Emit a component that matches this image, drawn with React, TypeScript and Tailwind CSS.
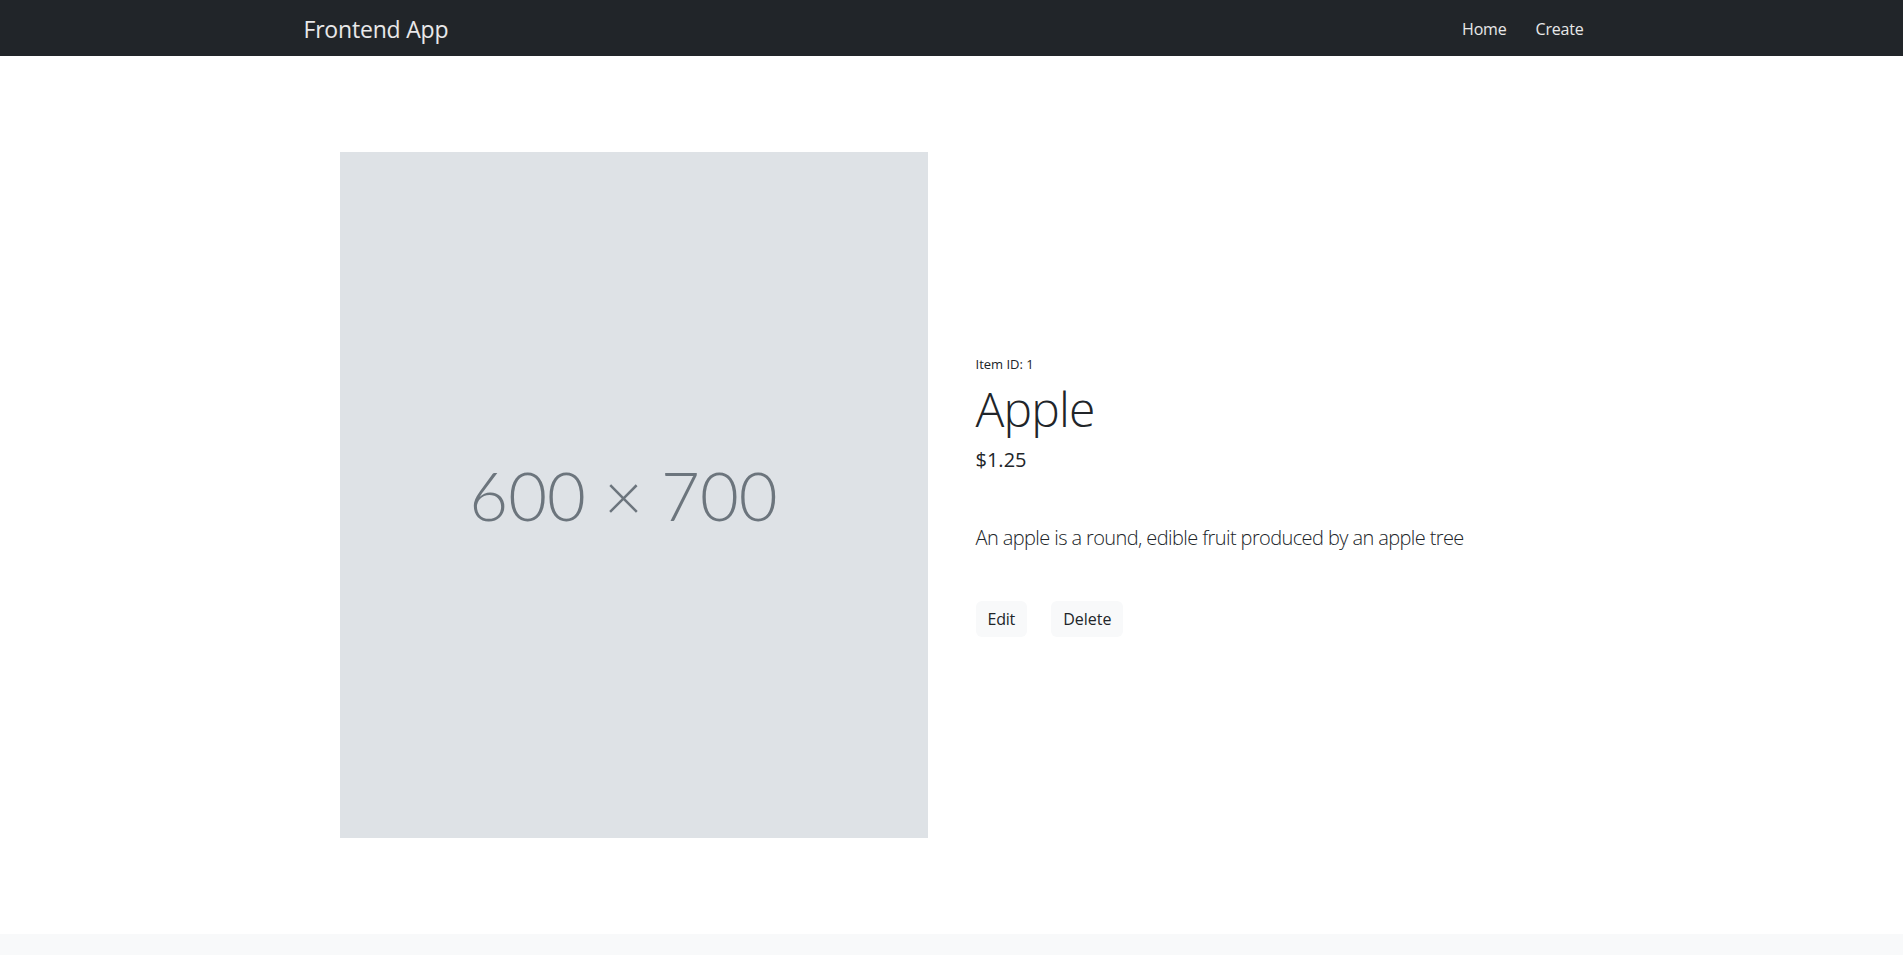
import React from "react";

const item = {
  id: 1,
  name: "Apple",
  price: 1.25,
  description: "An apple is a round, edible fruit produced by an apple tree",
};

function Navbar() {
  return (
    <nav className="bg-[#212529] h-[56px] flex justify-center">
      <div className="w-[1296px] flex items-center justify-between pt-[2px]">
        <a href="#" className="text-[23px] text-white/90 leading-[30px] tracking-[-0.2px]">
          Frontend App
        </a>
        <div className="flex items-center gap-[29px] text-[16px] text-white/90 pr-[16px] tracking-[-0.2px]">
          <a href="#">Home</a>
          <a href="#">Create</a>
        </div>
      </div>
    </nav>
  );
}

function Placeholder() {
  return (
    <div className="w-[588px] h-[686px] bg-[#dee2e6] flex items-center justify-center shrink-0">
      <span
        className="text-[67px] font-light text-[#6c757d] pr-[20px]"
        style={{ fontFamily: "Lato, 'Open Sans', sans-serif" }}
      >
        600 × 700
      </span>
    </div>
  );
}

export default function App() {
  return (
    <div
      className="bg-white text-[#212529]"
      style={{ fontFamily: "'Open Sans', 'Noto Sans', sans-serif" }}
    >
      <Navbar />
      <main className="flex justify-center py-[96px]">
        <div className="w-[1224px] flex items-center gap-[48px]">
          <Placeholder />
          <div className="flex flex-col">
            <small className="text-[13px] leading-[20px]">Item ID: {item.id}</small>
            <h1 className="text-[48px] leading-[58px] font-light mt-[6px] tracking-[-0.8px]">
              {item.name}
            </h1>
            <h5 className="text-[20px] leading-[30px] mt-[7px]">${item.price.toFixed(2)}</h5>
            <p className="text-[20px] leading-[30px] font-light mt-[48px] tracking-[-0.6px]">
              {item.description}
            </p>
            <div className="flex gap-[24px] mt-[48px]">
              <button className="bg-[#f8f9fa] rounded-[6px] px-[12px] py-[6px] text-[16px] leading-[24px] tracking-[-0.2px]">
                Edit
              </button>
              <button className="bg-[#f8f9fa] rounded-[6px] px-[12px] py-[6px] text-[16px] leading-[24px]">
                Delete
              </button>
            </div>
          </div>
        </div>
      </main>
      <footer className="bg-[#f8f9fa] h-[21px]" />
    </div>
  );
}
